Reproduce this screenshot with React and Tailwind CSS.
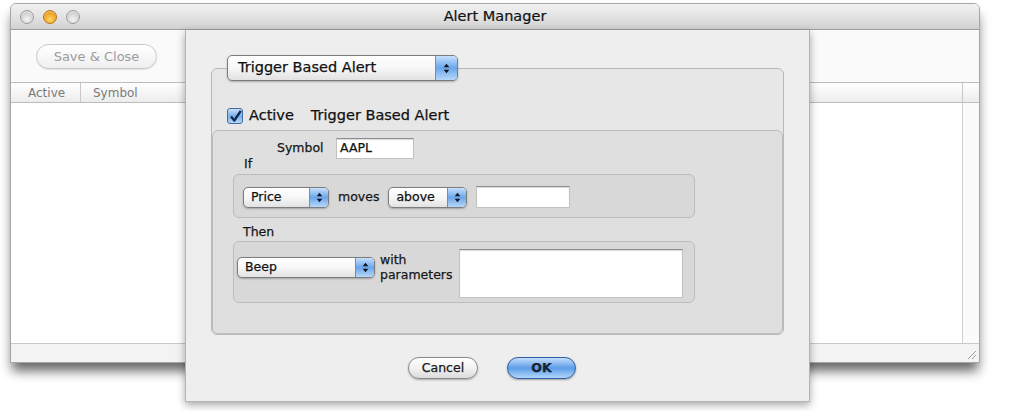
import React from "react";

const Light = ({ orange }) => (
  <div
    className={
      orange
        ? "h-[14px] w-[14px] rounded-full border border-[#b4741a] bg-[radial-gradient(circle_at_50%_70%,#ffd66a,#f0a21c_60%,#c27a10)] shadow-[inset_0_1px_1px_rgba(255,255,255,0.6)]"
        : "h-[14px] w-[14px] rounded-full border border-[#9a9a9a] bg-[radial-gradient(circle_at_50%_70%,#f4f4f4,#d2d2d2_60%,#b4b4b4)] shadow-[inset_0_1px_1px_rgba(255,255,255,0.7)]"
    }
  />
);

const Arrows = () => (
  <svg width="7" height="11" viewBox="0 0 7 11">
    <path d="M3.5 0.8 L6.3 4.2 H0.7Z M3.5 10.2 L6.3 6.8 H0.7Z" fill="#10151f" />
  </svg>
);

const Popup = ({ label, className, big }) => (
  <div
    className={`flex items-stretch overflow-hidden rounded-[5px] border border-[#7c7c7c] bg-gradient-to-b from-white via-[#f7f7f7] to-[#e2e2e2] shadow-[0_1px_2px_rgba(0,0,0,0.25)] ${className}`}
  >
    <div
      className={
        big
          ? "flex flex-1 items-center pl-[10px] text-[14.5px] text-[#111]"
          : "flex flex-1 items-center pl-[7px] text-[12.5px] text-[#111]"
      }
    >
      {label}
    </div>
    <div
      className={
        big
          ? "flex w-[22px] items-center justify-center border-l border-[#6f8fb8] bg-gradient-to-b from-[#c6e0fb] via-[#6aa6ea] to-[#b7d7f8]"
          : "flex w-[19px] items-center justify-center border-l border-[#6f8fb8] bg-gradient-to-b from-[#c6e0fb] via-[#6aa6ea] to-[#b7d7f8]"
      }
    >
      <Arrows />
    </div>
  </div>
);

const Field = ({ className, children }) => (
  <div
    className={`flex items-center border border-[#c2c2c2] border-t-[#8d8d8d] bg-white pl-[3px] text-[12.5px] text-[#111] shadow-[inset_0_1px_1px_rgba(0,0,0,0.15)] ${className}`}
  >
    {children}
  </div>
);

const Grip = () => (
  <svg width="12" height="12" viewBox="0 0 12 12">
    <path d="M11 3 L3 11 M11 7 L7 11" stroke="#9a9a9a" strokeWidth="1" />
    <path d="M11 4 L4 11 M11 8 L8 11" stroke="#ffffff" strokeWidth="1" />
  </svg>
);

export default function App() {
  return (
    <div className="relative h-[411px] w-[1020px] overflow-hidden bg-white font-['DejaVu_Sans',sans-serif]">
      {/* main window */}
      <div className="ml-[10px] mt-[3px] flex h-[360px] w-[970px] flex-col overflow-hidden rounded-t-[6px] border border-[#a6a6a6] bg-white shadow-[0_10px_12px_-2px_rgba(0,0,0,0.6)]">
        <div className="grid h-[26px] shrink-0 grid-cols-[1fr_auto_1fr] items-center border-b border-[#9c9c9c] bg-gradient-to-b from-[#f1f1f1] via-[#e3e3e3] to-[#d1d1d1] px-[9px]">
          <div className="flex gap-[9px]">
            <Light />
            <Light orange />
            <Light />
          </div>
          <div className="text-[14.5px] text-[#111] [-webkit-text-stroke:0.2px_#111]">Alert Manager</div>
          <div />
        </div>

        <div className="h-[52px] shrink-0 bg-[#fafafa] pl-[25px] pt-[14px]">
          <div className="flex h-[25px] w-[121px] items-center justify-center rounded-full border border-[#c9c9c9] bg-gradient-to-b from-white to-[#efefef] text-[13px] text-[#9c9c9c] shadow-[0_1px_1px_rgba(0,0,0,0.1)]">
            Save &amp; Close
          </div>
        </div>

        <div className="flex h-[21px] shrink-0 border-y border-[#bdbdbd] bg-gradient-to-b from-white to-[#ececec] text-[12px] text-[#7a7a7a]">
          <div className="flex w-[70px] items-center border-r border-[#c8c8c8] pl-[17px]">Active</div>
          <div className="flex flex-1 items-center pl-[12px]">Symbol</div>
          <div className="w-[17px] border-l border-[#c8c8c8]" />
        </div>

        <div className="flex flex-1">
          <div className="flex-1 bg-white" />
          <div className="w-[17px] border-l border-[#cfcfcf] bg-[#fbfbfb]" />
        </div>

        <div className="flex h-[19px] shrink-0 items-end justify-end border-t border-[#c9c9c9] bg-[#f3f3f3] pb-[2px] pr-[2px]">
          <Grip />
        </div>
      </div>

      {/* sheet */}
      <div className="absolute left-[185px] top-[30px] flex h-[372px] w-[625px] flex-col border-x border-b border-[#b3b3b3] bg-[#eeeeee] pl-[25px] pt-[25px] shadow-[0_3px_8px_rgba(0,0,0,0.35)] [-webkit-text-stroke:0.25px_#111]">
        <Popup big label="Trigger Based Alert" className="relative z-10 ml-[16px] h-[26px] w-[231px]" />

        <div className="-mt-[13px] flex h-[267px] w-[573px] flex-col rounded-[6px] border border-[#b8b8b8] bg-[#e7e7e7]">
          <div className="ml-[15px] mt-[39px] flex h-[16px] items-center text-[14.5px] text-[#111]">
            <div className="flex h-[16px] w-[16px] items-center justify-center rounded-[3px] border border-[#3f6ba6] bg-gradient-to-b from-[#c9e0fa] via-[#79afec] to-[#b6d6f8]">
              <svg width="13" height="13" viewBox="0 0 13 13">
                <path d="M2 6.5 L5.3 10.5 L11.8 0.8" fill="none" stroke="#13284d" strokeWidth="2.4" strokeLinejoin="round" />
              </svg>
            </div>
            <span className="ml-[6px]">Active</span>
            <span className="ml-[17px]">Trigger Based Alert</span>
          </div>

          <div className="mt-[6px] flex flex-1 flex-col rounded-[6px] border border-[#bdbdbd] bg-[#dfdfdf] text-[12.5px] text-[#1a1a1a]">
            <div className="mt-[7px] flex h-[21px] items-center">
              <span className="ml-[64px] w-[59px]">Symbol</span>
              <Field className="h-[21px] w-[78px]">AAPL</Field>
            </div>
            <div className="-mt-[2px] h-[14px] pl-[31px] leading-[14px]">If</div>

            <div className="ml-[20px] mt-[3px] flex h-[44px] w-[462px] items-center rounded-[6px] border border-[#bcbcbc] bg-[#d8d8d8] pl-[9px] pt-[2px]">
              <Popup label="Price" className="h-[21px] w-[86px]" />
              <span className="ml-[9px]">moves</span>
              <Popup label="above" className="ml-[9px] h-[21px] w-[79px]" />
              <Field className="ml-[9px] h-[22px] w-[94px]" />
            </div>

            <div className="mt-[7px] h-[14px] pl-[30px] leading-[14px]">Then</div>

            <div className="ml-[20px] mt-[2px] flex h-[62px] w-[462px] items-start rounded-[6px] border border-[#bcbcbc] bg-[#d8d8d8] pl-[3px]">
              <Popup label="Beep" className="mt-[15px] h-[21px] w-[138px]" />
              <div className="ml-[5px] mt-[10px] leading-[15px]">
                with
                <br />
                parameters
              </div>
              <Field className="ml-[6px] mt-[7px] h-[49px] w-[224px]" />
            </div>
          </div>
        </div>

        <div className="mt-[22px] flex gap-[29px] pl-[197px] text-[12.5px]">
          <div className="flex h-[22px] w-[70px] items-center justify-center rounded-full border border-[#8a8a8a] bg-gradient-to-b from-white via-[#f2f2f2] to-[#dcdcdc] text-[#222] shadow-[0_1px_2px_rgba(0,0,0,0.3)]">
            Cancel
          </div>
          <div className="flex h-[22px] w-[69px] items-center justify-center rounded-full border border-[#2c5da6] bg-gradient-to-b from-[#c4defb] via-[#5d9de8] to-[#b2d5fa] font-bold text-[#14233b] shadow-[0_1px_2px_rgba(0,0,0,0.35)]">
            OK
          </div>
        </div>
      </div>
    </div>
  );
}
